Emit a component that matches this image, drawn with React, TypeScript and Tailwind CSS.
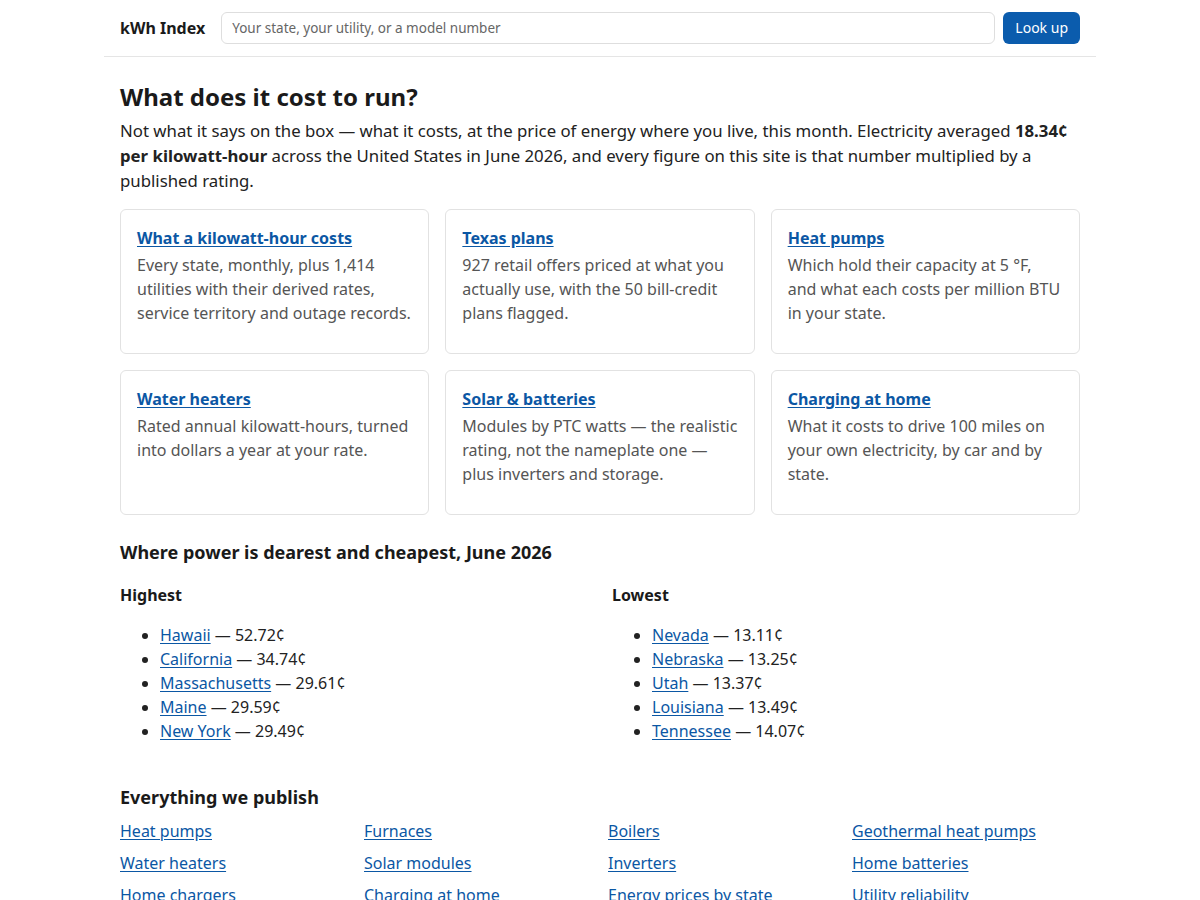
const cards = [
  { title: "What a kilowatt-hour costs", body: "Every state, monthly, plus 1,414 utilities with their derived rates, service territory and outage records." },
  { title: "Texas plans", body: "927 retail offers priced at what you actually use, with the 50 bill-credit plans flagged." },
  { title: "Heat pumps", body: "Which hold their capacity at 5 °F, and what each costs per million BTU in your state." },
  { title: "Water heaters", body: "Rated annual kilowatt-hours, turned into dollars a year at your rate." },
  { title: "Solar & batteries", body: "Modules by PTC watts — the realistic rating, not the nameplate one — plus inverters and storage." },
  { title: "Charging at home", body: "What it costs to drive 100 miles on your own electricity, by car and by state." },
];

const highest = [
  ["Hawaii", "52.72¢"],
  ["California", "34.74¢"],
  ["Massachusetts", "29.61¢"],
  ["Maine", "29.59¢"],
  ["New York", "29.49¢"],
];

const lowest = [
  ["Nevada", "13.11¢"],
  ["Nebraska", "13.25¢"],
  ["Utah", "13.37¢"],
  ["Louisiana", "13.49¢"],
  ["Tennessee", "14.07¢"],
];

const publish = [
  "Heat pumps", "Furnaces", "Boilers", "Geothermal heat pumps",
  "Water heaters", "Solar modules", "Inverters", "Home batteries",
  "Home chargers", "Charging at home", "Energy prices by state", "Utility reliability",
];

const RateList = ({ label, items }: { label: string; items: string[][] }) => (
  <div>
    <h3 className="text-base font-bold leading-6 text-[#1a1a1a]">{label}</h3>
    <ul className="list-disc pl-10 mt-4 text-base leading-6 text-[#222]">
      {items.map(([state, rate]) => (
        <li key={state}>
          <a href="#" className="text-[#0b57a4] underline underline-offset-2">{state}</a> — {rate}
        </li>
      ))}
    </ul>
  </div>
);

const App = () => {
  return (
    <div className="bg-white min-h-screen font-['Noto_Sans',sans-serif] text-[#222]">
      <div className="max-w-[992px] mx-auto">
        <header className="flex items-center gap-4 px-4 h-[57px] border-b border-[#e5e5e5]">
          <a href="#" className="text-base font-bold text-[#1a1a1a] shrink-0">kWh Index</a>
          <input
            className="flex-1 h-8 border border-[#dedede] rounded-md px-[10px] text-[13.5px] placeholder:text-[#666] outline-none"
            placeholder="Your state, your utility, or a model number"
          />
          <button className="h-8 px-3 rounded-md bg-[#0b5cad] text-white text-sm -ml-2">Look up</button>
        </header>

        <main className="px-4">
          <h1 className="mt-6 text-2xl leading-8 font-bold text-[#1a1a1a]">What does it cost to run?</h1>
          <p className="mt-[5px] text-[16.8px] leading-[25px]">
            Not what it says on the box — what it costs, at the price of energy where you live, this month. Electricity averaged <strong>18.34¢ per kilowatt-hour</strong> across the United States in June 2026, and every figure on this site is that number multiplied by a published rating.
          </p>

          <div className="grid grid-cols-3 gap-4 mt-4">
            {cards.map((c) => (
              <div key={c.title} className="border border-[#e2e2e2] rounded-md px-4 pt-4 pb-7">
                <a href="#" className="text-base leading-6 font-bold text-[#0b57a4] underline underline-offset-2">{c.title}</a>
                <p className="mt-[3px] text-base leading-6 text-[#555]">{c.body}</p>
              </div>
            ))}
          </div>

          <h2 className="mt-6 text-lg leading-[27px] font-bold text-[#1a1a1a]">Where power is dearest and cheapest, June 2026</h2>
          <div className="grid grid-cols-2 gap-6 mt-[17px]">
            <RateList label="Highest" items={highest} />
            <RateList label="Lowest" items={lowest} />
          </div>

          <h2 className="mt-[41px] text-lg leading-[27px] font-bold text-[#1a1a1a]">Everything we publish</h2>
          <div className="grid grid-cols-4 gap-x-4 gap-y-2 mt-2 pb-8">
            {publish.map((p) => (
              <a key={p} href="#" className="text-base leading-6 text-[#0b57a4] underline underline-offset-2">{p}</a>
            ))}
          </div>
        </main>
      </div>
    </div>
  );
};

export default App;
